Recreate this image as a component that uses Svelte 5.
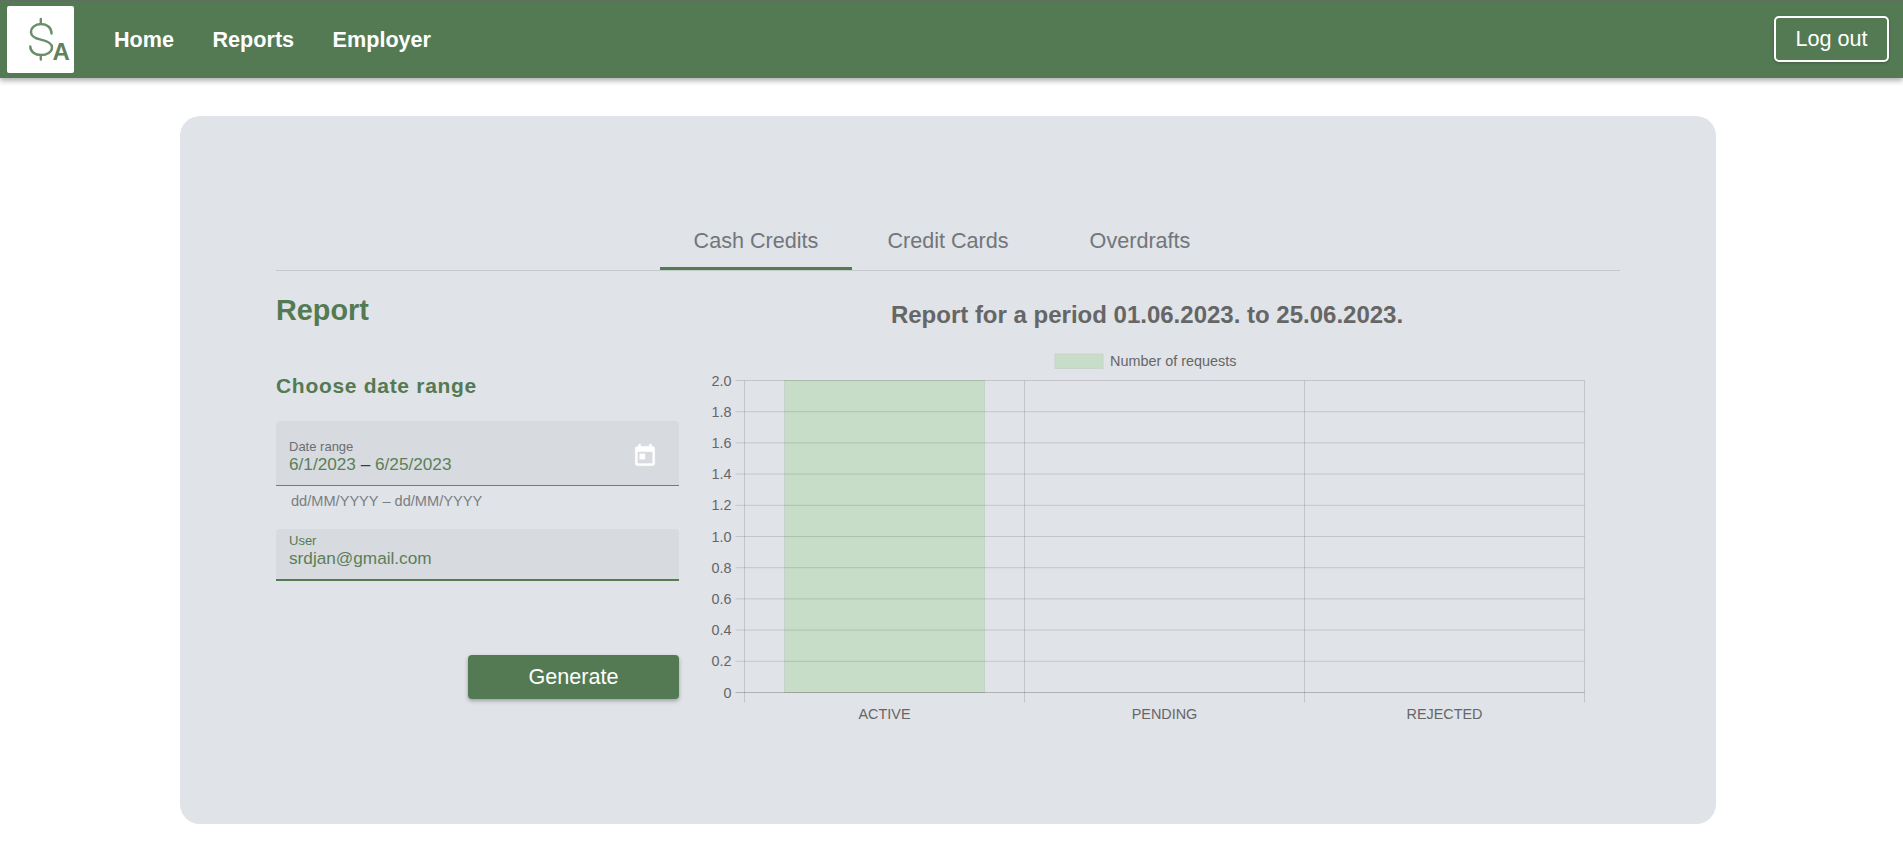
<script>
  const navLinks = ['Home', 'Reports', 'Employer'];
  const tabs = ['Cash Credits', 'Credit Cards', 'Overdrafts'];
  const activeTab = 'Cash Credits';

  // chart geometry, in the coordinates of the svg box
  const plotLeft = 35.5;
  const colWidth = 280;
  const plotTop = 41.5;
  const stepY = 31.2;
  const ticks = ['2.0', '1.8', '1.6', '1.4', '1.2', '1.0', '0.8', '0.6', '0.4', '0.2', '0'];
  const categories = ['ACTIVE', 'PENDING', 'REJECTED'];
  const plotBottom = plotTop + stepY * 10;
</script>

<header class="topbar">
  <div class="logo">
    <svg width="67" height="67" viewBox="0 0 67 67" aria-label="logo">
      <path class="dollar" d="M44.500 27.500C44.500 21.500 39.800 18 34 18C28.200 18 24 21.500 24 26.300C24 30.500 27.500 32.300 33.800 33.700C40.500 35.200 45 37.200 45 41.500C45 46 40 49 34 49C28 49 23.300 45.800 23.300 40.500M33.800 13V18M33.800 49V53.500" />
      <text class="logo-a" x="45.500" y="54">A</text>
    </svg>
  </div>
  <nav class="links">
    {#each navLinks as link}
      <span>{link}</span>
    {/each}
  </nav>
  <button class="logout">Log out</button>
</header>

<main class="page">
  <section class="card">
    <div class="tabs">
      {#each tabs as tab}
        <div class="tab" class:active={tab === activeTab}>{tab}</div>
      {/each}
    </div>

    <div class="content">
      <div class="form">
        <h2>Report</h2>
        <h3>Choose date range</h3>

        <div class="field date">
          <div class="field-text">
            <span class="label">Date range</span>
            <span class="value">6/1/2023 <i>–</i> 6/25/2023</span>
          </div>
          <svg class="cal" width="26" height="26" viewBox="0 0 24 24">
            <path d="M19 3h-1V1h-2v2H8V1H6v2H5c-1.110 0-1.990.9-1.990 2L3 19c0 1.100.89 2 2 2h14c1.100 0 2-.9 2-2V5c0-1.100-.9-2-2-2zm0 16H5V8h14v11zM7 10h5v5H7z" />
          </svg>
        </div>
        <div class="hint">dd/MM/YYYY – dd/MM/YYYY</div>

        <div class="field user">
          <div class="field-text">
            <span class="label">User</span>
            <span class="value">srdjan@gmail.com</span>
          </div>
        </div>

        <div class="actions">
          <button class="generate">Generate</button>
        </div>
      </div>

      <div class="chart">
        <h4>Report for a period 01.06.2023. to 25.06.2023.</h4>
        <svg class="plot" width="876" height="350" viewBox="0 0 876 350">
          <rect class="swatch" x="346" y="15" width="48" height="14.500" />
          <text class="legend" x="401" y="27">Number of requests</text>

          <rect class="bar" x="75.500" y={plotTop} width="200" height={stepY * 10} />

          {#each ticks as tick, i}
            <line class="grid" class:zero={tick === '0'} x1={plotLeft - 9} x2={plotLeft + colWidth * 3} y1={plotTop + stepY * i} y2={plotTop + stepY * i} />
            <text class="tick" x={plotLeft - 13} y={plotTop + stepY * i + 5}>{tick}</text>
          {/each}

          {#each [0, 1, 2, 3] as col}
            <line class="grid" x1={plotLeft + colWidth * col} x2={plotLeft + colWidth * col} y1={plotTop} y2={plotBottom + 10} />
          {/each}

          {#each categories as cat, i}
            <text class="cat" x={plotLeft + colWidth * (i + 0.5)} y={plotBottom + 26}>{cat}</text>
          {/each}
        </svg>
      </div>
    </div>
  </section>
</main>

<style>
  :global(body) {
    font-family: "Liberation Sans", Arial, sans-serif;
    background: #fff;
  }

  .topbar {
    display: flex;
    align-items: center;
    height: 78px;
    box-sizing: border-box;
    padding: 0 14px 0 7px;
    background: #547a53;
    border-top: 1px solid #5f6f5f;
    box-shadow: 0 3px 5px rgba(0, 0, 0, 0.3);
  }

  .logo {
    width: 67px;
    height: 67px;
    background: #fff;
    border-radius: 2px;
    margin-top: -1px;
  }

  .logo svg {
    display: block;
  }

  .dollar {
    fill: none;
    stroke: #6a8d6a;
    stroke-width: 2.4;
    stroke-linecap: round;
  }

  .logo-a {
    font-size: 24px;
    font-weight: 700;
    fill: #5d825c;
  }

  .links {
    display: flex;
    gap: 38.5px;
    margin-left: 40px;
    flex: 1;
    color: #fff;
    font-size: 21.6px;
    font-weight: 700;
  }

  .logout {
    width: 115px;
    height: 46px;
    margin-top: -1px;
    background: transparent;
    border: 2px solid #fff;
    border-radius: 5px;
    color: #fff;
    font: 21.6px "Liberation Sans", Arial, sans-serif;
    box-shadow: 0 1px 3px rgba(0, 0, 0, 0.25);
  }

  .page {
    width: 1896px;
    padding-top: 38px;
  }

  .card {
    width: 1536px;
    height: 708px;
    box-sizing: border-box;
    margin: 0 auto;
    padding: 106px 96px 0;
    background: #e0e3e8;
    border-radius: 20px;
  }

  .tabs {
    display: flex;
    justify-content: center;
    border-bottom: 1px solid #c6c9cc;
  }

  .tab {
    width: 192px;
    height: 48px;
    box-sizing: border-box;
    padding-top: 6px;
    text-align: center;
    color: #72767a;
    font-size: 21.6px;
  }

  .tab.active {
    border-bottom: 3px solid #547a53;
  }

  .content {
    display: flex;
    padding-right: 37px;
  }

  .form {
    flex: none;
    width: 403px;
  }

  h2 {
    margin: 22px 0 0;
    font-size: 28.8px;
    line-height: 34px;
    color: #547a53;
  }

  h3 {
    margin: 46px 0 0;
    font-size: 21px;
    letter-spacing: 0.7px;
    line-height: 26px;
    color: #547a53;
  }

  .field {
    display: flex;
    align-items: center;
    box-sizing: border-box;
    padding: 0 21px 0 13px;
    background: #d7dadf;
    border-radius: 4px 4px 0 0;
  }

  .field-text {
    flex: 1;
    display: flex;
    flex-direction: column;
  }

  .date {
    height: 65px;
    margin-top: 22px;
    border-bottom: 1px solid #77797c;
  }

  .date .field-text {
    padding-top: 6px;
  }

  .cal {
    margin-top: 6px;
    fill: #fff;
    stroke: #fff;
    stroke-width: 0.3;
  }

  .user {
    height: 52px;
    border-bottom: 2px solid #547a53;
  }

  .user .field-text {
    margin-top: -8px;
  }

  .label {
    font-size: 13px;
    line-height: 15px;
    color: #6b6f72;
  }

  .user .label {
    color: #547a53;
  }

  .value {
    font-size: 17.2px;
    line-height: 20px;
    color: #5a7f59;
  }

  .value i {
    font-style: normal;
    color: #3a3d40;
  }

  .hint {
    height: 43px;
    box-sizing: border-box;
    padding: 7px 0 0 15px;
    font-size: 14.6px;
    line-height: 16px;
    color: #7b7e82;
  }

  .actions {
    display: flex;
    justify-content: flex-end;
    margin-top: 74px;
  }

  .generate {
    width: 211px;
    height: 44px;
    background: #547a53;
    border: 0;
    border-radius: 4px;
    color: #fff;
    font: 21.6px "Liberation Sans", Arial, sans-serif;
    box-shadow: 0 2px 4px rgba(0, 0, 0, 0.3);
  }

  .chart {
    flex: 1;
    margin-left: 30px;
  }

  h4 {
    margin: 30px 0 0;
    height: 38px;
    text-align: center;
    font-size: 24px;
    line-height: 28px;
    color: #666;
  }

  .plot {
    display: block;
    overflow: visible;
  }

  .plot text {
    font-family: "Liberation Sans", Arial, sans-serif;
    font-size: 14.4px;
    fill: #666;
  }

  .plot .tick {
    text-anchor: end;
  }

  .plot .cat {
    text-anchor: middle;
  }

  .swatch {
    fill: #c8ddc8;
    stroke: #c9d3cb;
  }

  .bar {
    fill: #c8ddc8;
    stroke: #c6d3c8;
    stroke-width: 1;
  }

  .grid {
    stroke: rgba(0, 0, 0, 0.13);
    stroke-width: 1;
  }

  .grid.zero {
    stroke: rgba(0, 0, 0, 0.22);
  }
</style>
